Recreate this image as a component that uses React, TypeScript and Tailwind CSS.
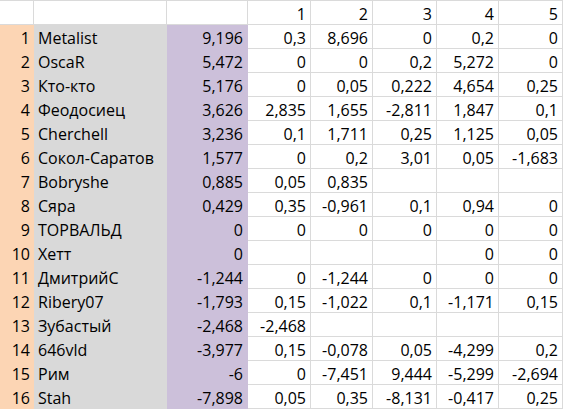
import { Fragment } from 'react';

const header = ['', '', '', '1', '2', '3', '4', '5'];

type Row = { name: string; total: string; vals: string[] };

const rows: Row[] = [
  { name: 'Metalist', total: '9,196', vals: ['0,3', '8,696', '0', '0,2', '0'] },
  { name: 'OscaR', total: '5,472', vals: ['0', '0', '0,2', '5,272', '0'] },
  { name: 'Кто-кто', total: '5,176', vals: ['0', '0,05', '0,222', '4,654', '0,25'] },
  { name: 'Феодосиец', total: '3,626', vals: ['2,835', '1,655', '-2,811', '1,847', '0,1'] },
  { name: 'Cherchell', total: '3,236', vals: ['0,1', '1,711', '0,25', '1,125', '0,05'] },
  { name: 'Сокол-Саратов', total: '1,577', vals: ['0', '0,2', '3,01', '0,05', '-1,683'] },
  { name: 'Bobryshe', total: '0,885', vals: ['0,05', '0,835', '', '', ''] },
  { name: 'Сяра', total: '0,429', vals: ['0,35', '-0,961', '0,1', '0,94', '0'] },
  { name: 'ТОРВАЛЬД', total: '0', vals: ['0', '0', '0', '0', '0'] },
  { name: 'Хетт', total: '0', vals: ['', '', '', '0', '0'] },
  { name: 'ДмитрийС', total: '-1,244', vals: ['0', '-1,244', '0', '0', '0'] },
  { name: 'Ribery07', total: '-1,793', vals: ['0,15', '-1,022', '0,1', '-1,171', '0,15'] },
  { name: 'Зубастый', total: '-2,468', vals: ['-2,468', '', '', '', ''] },
  { name: '646vld', total: '-3,977', vals: ['0,15', '-0,078', '0,05', '-4,299', '0,2'] },
  { name: 'Рим', total: '-6', vals: ['0', '-7,451', '9,444', '-5,299', '-2,694'] },
  { name: 'Stah', total: '-7,898', vals: ['0,05', '0,35', '-8,131', '-0,417', '0,25'] },
];

export default function App() {
  return (
    <div
      className="w-[563px] h-[409px] overflow-hidden bg-white text-black text-[16px] leading-none"
      style={{ fontFamily: '"Open Sans", "Liberation Sans", sans-serif' }}
    >
      <div className="grid grid-cols-[34px_133px_81px_63px_62px_64px_62px_64px]">
        {/* header row */}
        {header.map((h, i) => (
          <div
            key={'h' + i}
            className="h-[25px] border-t border-r border-b border-[#dadada] flex items-end justify-end pr-[4px] pb-[2px]"
          >
            {h}
          </div>
        ))}

        {rows.map((r, idx) => (
          <Fragment key={r.name}>
            <div className="h-[24px] bg-[#fcd5b4] flex items-end justify-end pr-[4px] pb-[3px]">{idx + 1}</div>
            <div className="h-[24px] bg-[#d9d9d9] flex items-end pl-[4px] pb-[3px] whitespace-nowrap">{r.name}</div>
            <div className="h-[24px] bg-[#ccc0da] flex items-end justify-end pr-[5px] pb-[3px]">{r.total}</div>
            {r.vals.map((v, j) => (
              <div
                key={j}
                className="h-[24px] border-r border-b border-[#dadada] flex items-end justify-end pr-[4px] pb-[2px]"
              >
                {v}
              </div>
            ))}
          </Fragment>
        ))}
      </div>
    </div>
  );
}
